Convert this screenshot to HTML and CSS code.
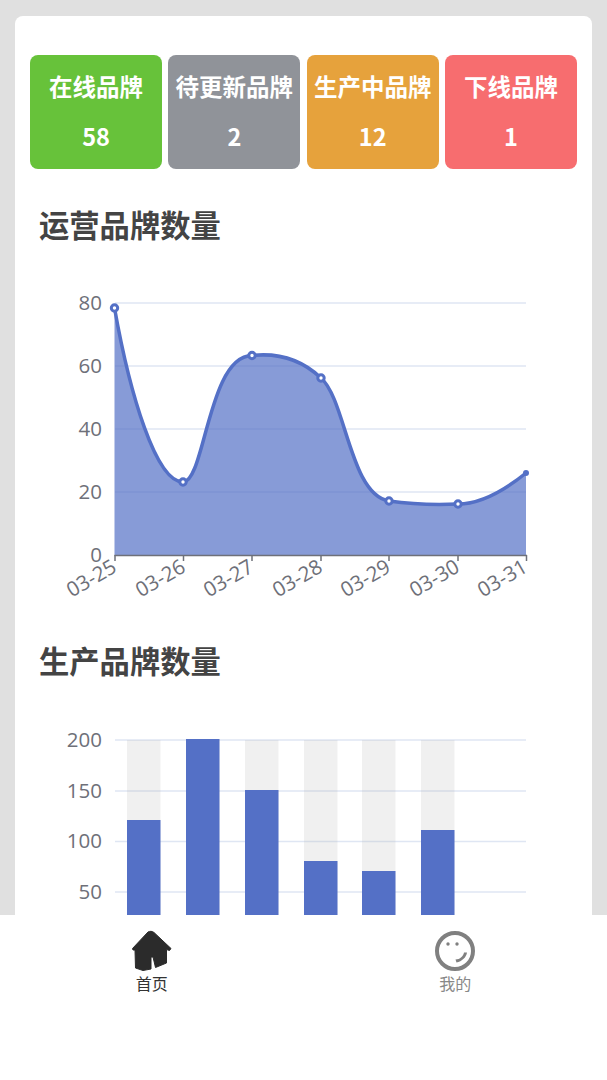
FILE: index.html
```html
<!DOCTYPE html>
<html lang="zh-CN">
<head>
  <meta charset="UTF-8">
  <title>品牌统计</title>
  <meta name="viewport" content="width=device-width, initial-scale=1.0">
  <link rel="stylesheet" href="styles.css">
</head>
<body>
  <main class="page">
    <div class="card">
      <div class="tiles">
        <div class="tile green"><div>在线品牌</div><div>58</div></div>
        <div class="tile grey"><div>待更新品牌</div><div>2</div></div>
        <div class="tile orange"><div>生产中品牌</div><div>12</div></div>
        <div class="tile red"><div>下线品牌</div><div>1</div></div>
      </div>

      <h2 class="title">运营品牌数量</h2>
      <svg class="chart line-chart" viewBox="30 256 547 376">
        <g class="grid">
          <line x1="115" y1="303" x2="526" y2="303"/>
          <line x1="115" y1="366" x2="526" y2="366"/>
          <line x1="115" y1="429" x2="526" y2="429"/>
          <line x1="115" y1="492" x2="526" y2="492"/>
        </g>
        <g class="y-labels">
          <text x="102" y="310">80</text>
          <text x="102" y="373">60</text>
          <text x="102" y="436">40</text>
          <text x="102" y="499">20</text>
          <text x="102" y="562">0</text>
        </g>
        <path class="area" d="M114.5 308C130 395 156 482 183 482C205 482 208 356 252 355.5C275 353 300 358 321 378C346 400 350 495 389 501C410 504 435 505 458 504C480 504 505 490 526 473L526 555L114.5 555Z"/>
        <g class="axis">
          <line x1="114.5" y1="555.5" x2="527" y2="555.5"/>
          <line x1="115" y1="555" x2="115" y2="561"/>
          <line x1="183.5" y1="555" x2="183.5" y2="561"/>
          <line x1="252" y1="555" x2="252" y2="561"/>
          <line x1="321" y1="555" x2="321" y2="561"/>
          <line x1="389" y1="555" x2="389" y2="561"/>
          <line x1="458" y1="555" x2="458" y2="561"/>
          <line x1="526.5" y1="555" x2="526.5" y2="561"/>
        </g>
        <path class="curve" d="M114.5 308C130 395 156 482 183 482C205 482 208 356 252 355.5C275 353 300 358 321 378C346 400 350 495 389 501C410 504 435 505 458 504C480 504 505 490 526 473"/>
        <g class="dots">
          <circle cx="114.500" cy="308" r="3.200"/>
          <circle cx="183" cy="482" r="3.200"/>
          <circle cx="252" cy="355.500" r="3.200"/>
          <circle cx="321" cy="378" r="3.200"/>
          <circle cx="389" cy="501" r="3.200"/>
          <circle cx="458" cy="504" r="3.200"/>
          <circle class="last" cx="526" cy="473" r="3"/>
        </g>
        <g class="x-labels">
          <text transform="translate(118 571) rotate(-30)">03-25</text>
          <text transform="translate(187 571) rotate(-30)">03-26</text>
          <text transform="translate(255 571) rotate(-30)">03-27</text>
          <text transform="translate(324 571) rotate(-30)">03-28</text>
          <text transform="translate(392 571) rotate(-30)">03-29</text>
          <text transform="translate(461 571) rotate(-30)">03-30</text>
          <text transform="translate(529 571) rotate(-30)">03-31</text>
        </g>
      </svg>

      <h2 class="title">生产品牌数量</h2>
      <svg class="chart bar-chart" viewBox="30 692 547 308">
        <g class="grid">
          <line x1="115" y1="740" x2="526" y2="740"/>
          <line x1="115" y1="791" x2="526" y2="791"/>
          <line x1="115" y1="841.500" x2="526" y2="841.500"/>
          <line x1="115" y1="892" x2="526" y2="892"/>
        </g>
        <g class="y-labels">
          <text x="102" y="747">200</text>
          <text x="102" y="798">150</text>
          <text x="102" y="848">100</text>
          <text x="102" y="899">50</text>
        </g>
        <g class="bar-bg">
          <rect x="127" y="740" width="33.500" height="260"/>
          <rect x="186" y="740" width="33.500" height="260"/>
          <rect x="245" y="740" width="33.500" height="260"/>
          <rect x="304" y="740" width="33.500" height="260"/>
          <rect x="362" y="740" width="33.500" height="260"/>
          <rect x="421" y="740" width="33.500" height="260"/>
        </g>
        <g class="bars">
          <rect x="127" y="820" width="33.500" height="180"/>
          <rect x="186" y="739" width="33.500" height="261"/>
          <rect x="245" y="790" width="33.500" height="210"/>
          <rect x="304" y="861" width="33.500" height="139"/>
          <rect x="362" y="871" width="33.500" height="129"/>
          <rect x="421" y="830" width="33.500" height="170"/>
        </g>
      </svg>
    </div>
  </main>

  <nav class="tabbar">
    <a class="tab active">
      <svg class="tab-icon" viewBox="0 0 42 42">
        <path class="home" d="M17 2C19 1 21 1 23 2.500L40 18.500L38.500 20.500L35.500 19.500L35.500 33L24.500 37.500L22 27L20 27L20 39L12 40.500L4.500 38L4 20L2 20L1.500 18.500Z"/>
      </svg>
      <span>首页</span>
    </a>
    <a class="tab">
      <svg class="tab-icon" viewBox="0 0 42 42">
        <circle class="face" cx="21" cy="21" r="18"/>
        <circle class="eye" cx="14" cy="14" r="1.700"/>
        <circle class="eye" cx="23" cy="14" r="1.700"/>
        <path class="smile" d="M33 22.500C32.500 27 28 31.500 22.500 32.500L21.500 29.500C26 29.500 29.500 26 30 22.500Z"/>
      </svg>
      <span>我的</span>
    </a>
  </nav>
</body>
</html>
```

FILE: styles.css
```css
* { box-sizing: border-box; }
html, body { margin: 0; height: 100%; }
body { display: flex; flex-direction: column; height: 1080px; overflow: hidden; background: #e0e0e0; font-family: "Noto Sans CJK SC", "Open Sans", sans-serif; }

.page { height: 915px; overflow: hidden; padding: 16px 15px 0; }
.card { background: #fff; border-radius: 8px 8px 0 0; padding: 39px 15px 0; }

.tiles { display: flex; justify-content: space-between; }
.tile { width: 132px; height: 114px; padding: 6px 0; border-radius: 8px; color: #fff; font-size: 23.500px; font-weight: 700; line-height: 50px; text-align: center; white-space: nowrap; }
.green { background: #67c23a; }
.grey { background: #909399; }
.orange { background: #e6a23c; }
.red { background: #f76d6f; }

.title { margin: 0; height: 60px; padding-left: 9px; color: #444; font-size: 30.300px; font-weight: 700; line-height: 57px; }
.tiles + .title { margin-top: 27px; }

.chart { display: block; width: 547px; }
.line-chart { height: 376px; }
.bar-chart { height: 308px; }
.chart text { fill: #6e7079; font-family: "Open Sans", sans-serif; font-size: 20.500px; }
.y-labels text, .x-labels text { text-anchor: end; }

.grid line { stroke: #dfe6f3; stroke-width: 1.500; }
.axis line { stroke: #6e7079; stroke-width: 1.500; }
.area { fill: #5470c6; fill-opacity: 0.7; }
.curve { fill: none; stroke: #5470c6; stroke-width: 3.500; }
.dots circle { fill: #fff; stroke: #5470c6; stroke-width: 3; }
.dots .last { fill: #5470c6; stroke: none; }
.bar-bg rect { fill: rgba(180, 180, 180, 0.2); }
.bars rect { fill: #5470c6; }

.tabbar { display: flex; height: 165px; background: #fff; }
.tab { flex: 1; display: flex; flex-direction: column; align-items: center; padding-top: 15px; color: #888; font-size: 16px; line-height: 22px; }
.tab.active { color: #333; }
.tab-icon { display: block; width: 42px; height: 42px; }
.home { fill: #2b2b2b; stroke: #2b2b2b; stroke-width: 1; stroke-linejoin: round; }
.face { fill: none; stroke: #808080; stroke-width: 4; }
.eye, .smile { fill: #808080; }
```
